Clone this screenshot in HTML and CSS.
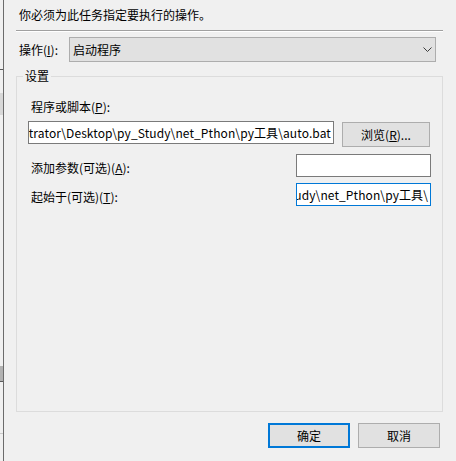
FILE: index.html
```html
<!DOCTYPE html>
<html lang="zh-CN">
<head>
<meta charset="utf-8">
<title>编辑操作</title>
<link rel="stylesheet" href="styles.css">
</head>
<body>
<div class="screen">
  <div class="strip">
    <div class="s s1"></div>
    <div class="s dark"></div>
    <div class="s s2"></div>
    <div class="s lightgray"></div>
    <div class="s s3"></div>
    <div class="s midgray"></div>
    <div class="s dark"></div>
    <div class="s s4"></div>
    <div class="s faint"></div>
    <div class="s rest"></div>
  </div>
  <div class="edge"></div>
  <div class="dialog">
    <div class="prompt">你必须为此任务指定要执行的操作。</div>
    <div class="sep"></div>
    <div class="oprow">
      <span class="oplabel">操作(<u>I</u>):</span>
      <div class="combo">
        <span>启动程序</span>
        <svg class="chev" width="9" height="5" viewBox="0 0 9 5"><path d="M0.5 0.5 L4.5 4.5 L8.5 0.5" fill="none" stroke="#3c3c3c" stroke-width="1"/></svg>
      </div>
    </div>
    <div class="group">
      <span class="legend">设置</span>
      <div class="label">程序或脚本(<u>P</u>):</div>
      <div class="row1">
        <div class="input wide"><span>strator\Desktop\py_Study\net_Pthon\py工具\auto.bat</span></div>
        <div class="btn browse">浏览(<u>R</u>)...</div>
      </div>
      <div class="row">
        <div class="label inline">添加参数(可选)(<u>A</u>):</div>
        <div class="input narrow"></div>
      </div>
      <div class="row r3">
        <div class="label inline">起始于(可选)(<u>T</u>):</div>
        <div class="input narrow focus"><span>udy\net_Pthon\py工具\</span></div>
      </div>
    </div>
    <div class="footer">
      <div class="btn fbtn default">确定</div>
      <div class="btn fbtn">取消</div>
    </div>
  </div>
</div>
</body>
</html>
```

FILE: styles.css
```css
html, body {
  margin: 0;
  padding: 0;
  background: #f0f0f0;
}
body {
  font-family: "Noto Sans CJK SC", "Noto Sans", sans-serif;
  font-size: 12px;
  color: #000;
}
u {
  text-decoration: underline;
  text-underline-offset: 1px;
}
.screen {
  display: flex;
  width: 456px;
  height: 461px;
  overflow: hidden;
}
.strip {
  width: 3px;
  display: flex;
  flex-direction: column;
}
.s { width: 3px; }
.s1 { height: 69px; }
.dark { height: 1px; background: #5a5a5a; }
.s2 { height: 23px; }
.lightgray { height: 22px; background: #d8d8d8; }
.s3 { height: 251px; }
.midgray { height: 15px; background: #b2b2b2; }
.s4 { height: 51px; }
.faint { height: 1px; background: #cacaca; }
.rest { flex: 1; }
.edge {
  width: 1px;
  background: #6b6b6b;
}
.dialog {
  flex: 1;
  display: flex;
  flex-direction: column;
}
.prompt {
  margin: 7px 0 0 15px;
  line-height: 16px;
  height: 16px;
}
.sep {
  margin: 7px 0 0 12px;
  width: 427px;
  height: 0;
  border-top: 1px solid #a0a0a0;
  border-bottom: 1px solid #ffffff;
}
.oprow {
  display: flex;
  align-items: center;
  margin: 5px 0 0 15px;
  height: 25px;
}
.oplabel {
  width: 50px;
  line-height: 16px;
}
.combo {
  box-sizing: border-box;
  width: 367px;
  height: 25px;
  border: 1px solid #adadad;
  background: #e1e1e1;
  display: flex;
  align-items: center;
  justify-content: space-between;
  padding: 0 3px 0 3px;
  line-height: 16px;
}
.chev { display: block; }
.group {
  position: relative;
  box-sizing: border-box;
  margin: 14px 0 0 12px;
  width: 427px;
  height: 336px;
  border: 1px solid #dcdcdc;
  padding: 22px 11px 0 11px;
}
.legend {
  position: absolute;
  top: -9px;
  left: 6px;
  padding: 0 2px;
  background: #f0f0f0;
  line-height: 16px;
}
.label {
  margin-left: 3px;
  line-height: 16px;
}
.row1 {
  display: flex;
  align-items: flex-start;
  gap: 8px;
  margin-top: 6px;
}
.input {
  box-sizing: border-box;
  height: 23px;
  border: 1px solid #7a7a7a;
  background: #ffffff;
  overflow: hidden;
  display: flex;
  justify-content: flex-end;
  align-items: center;
  white-space: nowrap;
  padding: 0 2px;
  line-height: 16px;
  letter-spacing: 0.1px;
}
.input span { flex-shrink: 0; }
.wide { width: 306px; }
.narrow { width: 135px; margin-left: auto; }
.focus { border-color: #0078d7; }
.btn {
  box-sizing: border-box;
  height: 25px;
  border: 1px solid #adadad;
  background: #e1e1e1;
  display: flex;
  align-items: center;
  justify-content: center;
  line-height: 16px;
}
.browse {
  width: 88px;
  margin-top: 1px;
}
.row {
  display: flex;
  align-items: flex-start;
  margin-top: 7px;
}
.row.r3 { margin-top: 6px; }
.label.inline { margin-top: 6px; }
.footer {
  display: flex;
  justify-content: flex-end;
  gap: 8px;
  margin-top: 11px;
  padding-right: 16px;
}
.fbtn { width: 82px; }
.default {
  border: 2px solid #0078d7;
}
```
